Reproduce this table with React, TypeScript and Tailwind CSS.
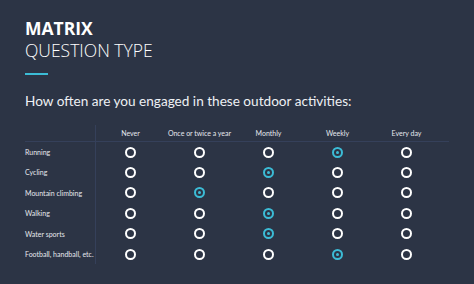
const COLS = ["Never", "Once or twice a year", "Monthly", "Weekly", "Every day"];

const ROWS: { label: string; pick: number }[] = [
  { label: "Running", pick: 3 },
  { label: "Cycling", pick: 2 },
  { label: "Mountain climbing", pick: 1 },
  { label: "Walking", pick: 2 },
  { label: "Water sports", pick: 2 },
  { label: "Football, handball, etc.", pick: 3 },
];

function Radio({ on }: { on: boolean }) {
  if (on) {
    return (
      <span className="w-[11px] h-[11px] rounded-full border-2 border-[#3cbcd6] flex items-center justify-center">
        <span className="w-[3px] h-[3px] rounded-full bg-[#3cbcd6]" />
      </span>
    );
  }
  return <span className="w-[11px] h-[11px] rounded-full border-2 border-white" />;
}

export default function App() {
  return (
    <div
      className="w-[474px] h-[284px] bg-[#2c3445] text-white overflow-hidden px-[25px] pt-[17px]"
      style={{ fontFamily: '"Open Sans", Lato, sans-serif' }}
    >
      <div className="text-[17.5px] font-bold leading-[22px]">MATRIX</div>
      <div className="text-[17.5px] font-light leading-[22px]">QUESTION TYPE</div>
      <div className="w-[23px] h-[2px] bg-[#3cbcd6] mt-[12px]" />

      <div className="mt-[18px] text-[13.6px] leading-[17px] text-[#eef0f4]" style={{ fontFamily: 'Lato, "Open Sans", sans-serif' }}>
        How often are you engaged in these outdoor activities:
      </div>

      {/* matrix */}
      <div className="mt-[15px] text-[7px] text-[#e6e8ee]" style={{ fontFamily: 'Lato, sans-serif' }}>
        <div className="grid grid-cols-[71px_repeat(5,69px)] h-[17px] items-center border-b border-[#35405a]">
          <div className="h-full border-r border-[#35405a]" />
          {COLS.map((c) => (
            <div key={c} className="text-center">{c}</div>
          ))}
        </div>
        {ROWS.map((r) => (
          <div key={r.label} className="grid grid-cols-[71px_repeat(5,69px)] h-[20.4px] items-center">
            <div className="h-full flex items-center border-r border-[#35405a]">{r.label}</div>
            {COLS.map((c, j) => (
              <div key={c} className="flex justify-center">
                <Radio on={j === r.pick} />
              </div>
            ))}
          </div>
        ))}
      </div>
    </div>
  );
}
